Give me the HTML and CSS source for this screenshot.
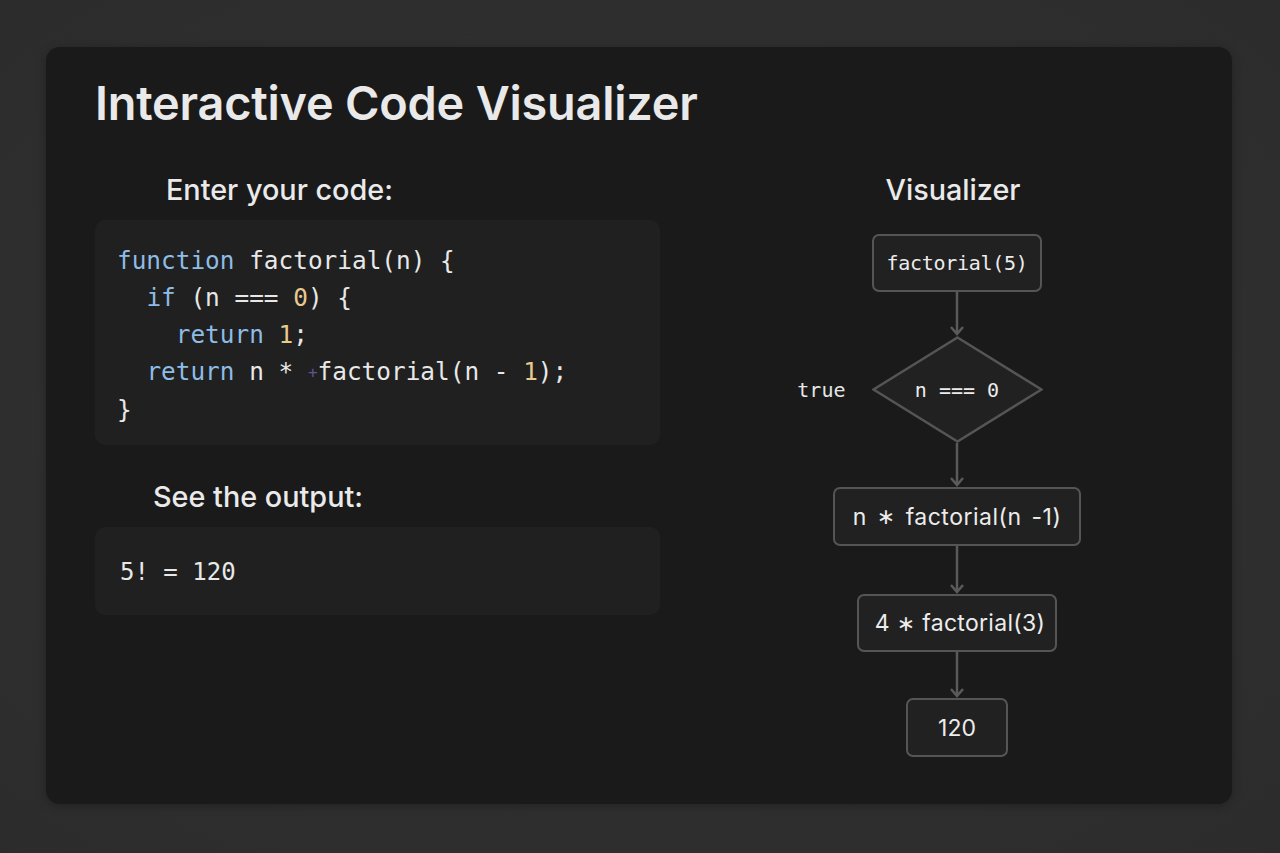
FILE: index.html
```html
<!DOCTYPE html>
<html lang="en">
<head>
<meta charset="utf-8">
<title>Interactive Code Visualizer</title>
<link rel="stylesheet" href="styles.css">
</head>
<body>
<main class="card">
  <h1 class="title">Interactive Code Visualizer</h1>
  <div class="columns">
    <section class="left">
      <h2 class="label label-code">Enter your code:</h2>
      <div class="code-box">
        <div class="line"><span class="kw">function</span> factorial(n) {</div>
        <div class="line">  <span class="kw">if</span> (n === <span class="num">0</span>) {</div>
        <div class="line">    <span class="kw">return</span> <span class="num">1</span>;</div>
        <div class="line">  <span class="kw">return</span> n * <span class="plus">+</span>factorial(n - <span class="num">1</span>);</div>
        <div class="line">}</div>
      </div>
      <h2 class="label label-output">See the output:</h2>
      <div class="output-box"><div class="line">5! = 120</div></div>
    </section>
    <section class="right">
      <h2 class="label label-vis">Visualizer</h2>
      <div class="flow">
        <div class="node node-start">factorial(5)</div>
        <svg class="arrow" width="20" height="44" viewBox="0 0 20 44"><path d="M10 0V42M4 35L10 42L16 35"/></svg>
        <div class="decision">
          <span class="branch">true</span>
          <svg class="diamond" width="171" height="107" viewBox="0 0 171 107"><polygon points="85.5,1.5 169.5,53.5 85.5,105.5 1.5,53.5"/></svg>
          <span class="decision-text">n === 0</span>
        </div>
        <svg class="arrow" width="20" height="44" viewBox="0 0 20 44"><path d="M10 0V42M4 35L10 42L16 35"/></svg>
        <div class="node node-rec">n <span class="ast">∗</span> factorial(n -1)</div>
        <svg class="arrow" width="20" height="48" viewBox="0 0 20 48"><path d="M10 0V46M4 39L10 46L16 39"/></svg>
        <div class="node node-step">4 <span class="ast">∗</span> factorial(3)</div>
        <svg class="arrow" width="20" height="46" viewBox="0 0 20 46"><path d="M10 0V44M4 37L10 44L16 37"/></svg>
        <div class="node node-result">120</div>
      </div>
    </section>
  </div>
</main>
</body>
</html>
```
FILE: styles.css
```css
* { box-sizing: border-box; }
html, body { margin: 0; height: 100%; }
body {
  background: radial-gradient(ellipse at center, #333 0%, #2c2c2c 100%);
  padding: 47px 48px 49px 46px;
  font-family: Inter, "Noto Sans", sans-serif;
  color: #ececec;
}
.card {
  width: 1186px;
  height: 757px;
  background: #1a1a1a;
  border-radius: 14px;
  padding: 27px 18px 0 49px;
  box-shadow: 0 2px 10px rgba(0,0,0,0.25);
}
.title {
  margin: 0;
  font-size: 46.8px;
  font-weight: 600;
  line-height: 58px;
  color: #e9e9e9;
  letter-spacing: -0.2px;
}
.columns {
  display: grid;
  grid-template-columns: 565px 514px;
  column-gap: 40px;
  margin-top: 40px;
}
.label {
  margin: 0;
  font-size: 28.8px;
  font-weight: 500;
  line-height: 36px;
  color: #eaeaea;
}
.label-code { padding-left: 71px; }
.label-output { padding-left: 58px; margin-top: 34px; }
.label-vis { text-align: center; padding-right: 8px; }
.code-box, .output-box {
  background: #202020;
  border-radius: 10px;
  font-family: "DejaVu Sans Mono", "Liberation Mono", monospace;
  font-size: 24.4px;
  color: #e8e8e8;
}
.line { white-space: pre; }
.code-box {
  margin-top: 12px;
  height: 225px;
  padding: 22px 22px 18px;
  line-height: 37px;
}
.output-box {
  margin-top: 12px;
  height: 88px;
  padding: 0 25px;
  line-height: 90px;
  font-size: 24px;
}
.kw { color: #8dbde6; }
.num { color: #e8c98e; }
.plus { color: #5e5690; font-size: 16px; vertical-align: 2px; }
.right { display: flex; flex-direction: column; }
.flow {
  margin-top: 26px;
  display: flex;
  flex-direction: column;
  align-items: center;
}
.node {
  background: #212121;
  border: 2.5px solid #555;
  border-radius: 7px;
  height: 58px;
  display: flex;
  align-items: center;
  justify-content: center;
  white-space: pre;
  font-family: "DejaVu Sans Mono", monospace;
  font-size: 20px;
  color: #ececec;
}
.node-start { width: 170px; letter-spacing: -0.3px; }
.node-rec {
  width: 248px; height: 59px;
  font-family: Inter, sans-serif; font-size: 23px;
  letter-spacing: 0.5px; word-spacing: 3px;
}
.node-step {
  width: 200px;
  font-family: Inter, sans-serif; font-size: 23px;
  letter-spacing: 0.3px; word-spacing: 0;
  padding-left: 6px;
}
.ast { font-family: "DejaVu Sans", sans-serif; font-size: 22px; }
.node-result { width: 102px; height: 59px; font-family: Inter, sans-serif; font-size: 23px; }
.arrow { display: block; }
.arrow path { fill: none; stroke: #5a5a5a; stroke-width: 2.5; }
.decision {
  position: relative;
  display: grid;
  place-items: center;
  width: 171px;
  height: 107px;
}
.diamond, .decision-text { grid-area: 1 / 1; }
.diamond polygon { fill: #212121; stroke: #555; stroke-width: 2.5; }
.decision-text {
  font-family: "DejaVu Sans Mono", monospace;
  font-size: 20px;
  color: #ececec;
}
.branch {
  position: absolute;
  right: calc(100% + 26px);
  top: 50%;
  transform: translateY(-50%);
  font-family: "DejaVu Sans Mono", monospace;
  font-size: 20px;
  color: #e6e6e6;
}
```
